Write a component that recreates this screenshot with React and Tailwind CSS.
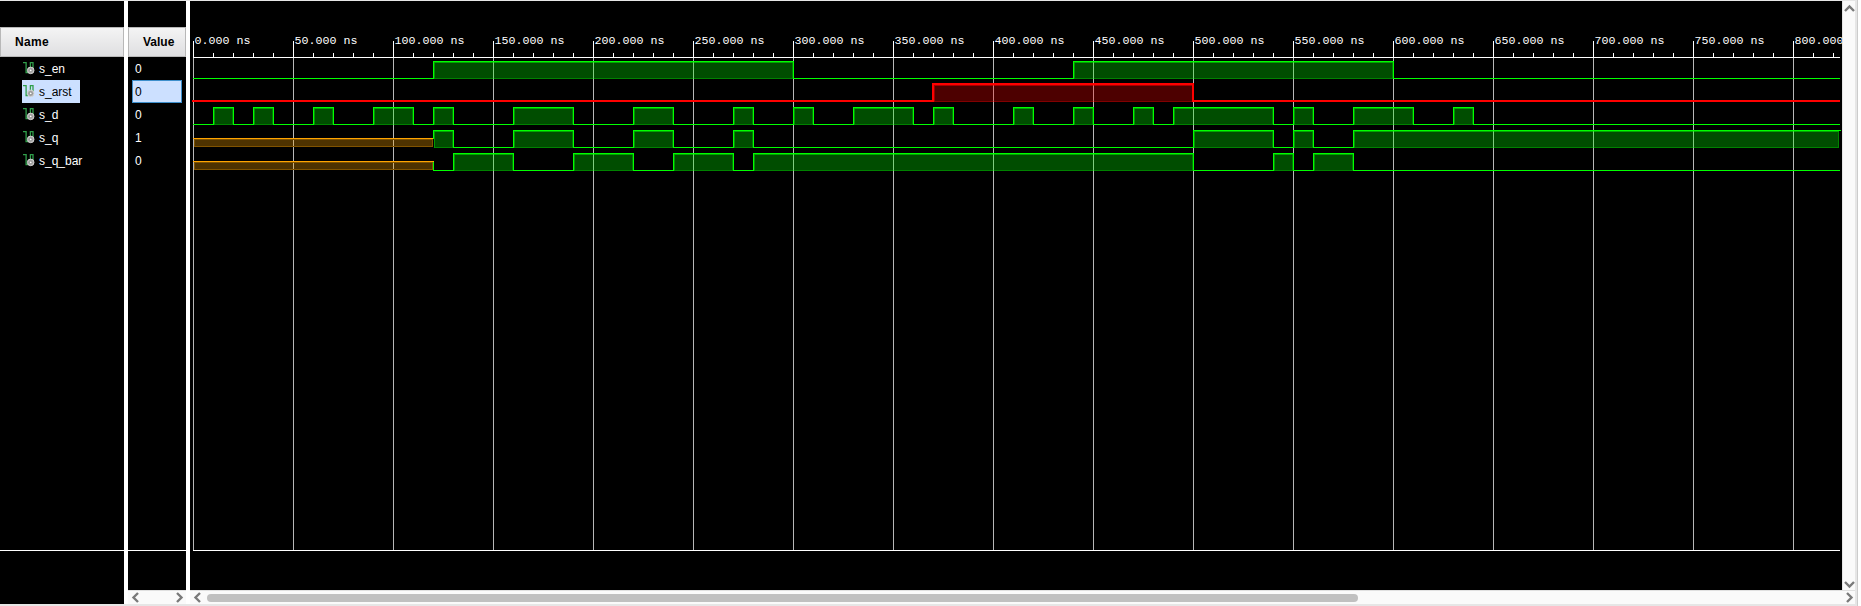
const X = (ns) => ns * 2 + 3;
const WIDTH = 1650;
const SIGNALS = [
  { name: "s_en", value: "0", top: 59, high: [[120, 300], [440, 600]] },
  { name: "s_arst", value: "0", top: 82, red: true, selected: true, high: [[370, 500]] },
  {
    name: "s_d", value: "0", top: 105,
    high: [[10, 20], [30, 40], [60, 70], [90, 110], [120, 130], [160, 190], [220, 240], [270, 280], [300, 310], [330, 360], [370, 380], [410, 420], [440, 450], [470, 480], [490, 540], [550, 560], [580, 610], [630, 640]],
  },
  { name: "s_q", value: "1", top: 128, unknown: 120, high: [[120, 130], [160, 190], [220, 240], [270, 280], [500, 540], [550, 560], [580, null]] },
  { name: "s_q_bar", value: "0", top: 151, unknown: 120, high: [[130, 160], [190, 220], [240, 270], [280, 500], [540, 550], [560, 580]] },
];

function SignalIcon() {
  return (
    <svg width="12" height="13" viewBox="0 0 12 13" className="shrink-0">
      <path d="M0 0.6H3.1V10.5H5M7.4 7V0.6H10V7" fill="none" stroke="#2f9e4a" strokeWidth="1.3" />
      <circle cx="7.7" cy="8.4" r="3.3" fill="#a8a8a8" stroke="#d8d8d8" strokeWidth="0.9" />
      <circle cx="7.7" cy="8.4" r="1.3" fill="#ffffff" stroke="#777777" strokeWidth="0.7" />
    </svg>
  );
}

function Arrow({ dir }) {
  const d = { left: "M8 1L3.5 5.5L8 10", right: "M3 1L7.5 5.5L3 10", up: "M1 8L5.5 3.5L10 8", down: "M1 3L5.5 7.5L10 3" }[dir];
  return (
    <svg width="11" height="11" viewBox="0 0 11 11" className="shrink-0">
      <path d={d} fill="none" stroke="#7a7a7a" strokeWidth="2.4" />
    </svg>
  );
}

function tracePath(s) {
  const hi = s.top + 1.5;
  const lo = s.top + 18.5;
  const start = s.unknown ? X(s.unknown) : 3;
  let d = "";
  let x = start;
  s.high.forEach(([a, b]) => {
    const xa = X(a);
    const xb = b === null ? WIDTH : X(b);
    if (s.unknown === a) {
      d += `M${xa + 0.5} ${s.top + 10}V${hi}H${xb + 0.5}`;
    } else {
      if (s.unknown && x === start) d += `M${x + 0.5} ${s.top + 10}V${lo}`;
      d += `M${x} ${lo}H${xa + 0.5}V${hi}H${xb + 0.5}`;
    }
    if (b !== null) d += `V${lo}`;
    x = xb;
  });
  if (x < WIDTH) d += `M${x} ${lo}H${WIDTH}`;
  return d;
}

function boldTracePath(s) {
  const hi = s.top + 1;
  const lo = s.top + 18;
  const body = s.high.map(([a, b]) => `H${X(a)}V${hi}H${X(b)}V${lo}`).join("");
  return `M2 ${lo}${body}H${WIDTH}`;
}

function Wave({ s }) {
  const hi = s.top + 1;
  const lo = s.top + 18;
  const color = s.red ? "#ff0000" : "#00ff00";
  return (
    <g>
      {s.unknown && (
        <g>
          <rect x="4" y={s.top + 10} width={X(s.unknown) - 4} height="8" fill="#ffa500" fillOpacity="0.3" />
          <rect x="4.5" y={s.top + 10.5} width={X(s.unknown) - 5} height="7" fill="none" stroke="#805300" />
          <rect x="3" y={s.top + 9} width={X(s.unknown) - 2} height="1" fill="#ffa500" />
        </g>
      )}
      {s.high.map(([a, b]) => {
        const xa = X(a);
        const xb = b === null ? WIDTH - 1 : X(b);
        return (
          <g key={a} fill={color}>
            <rect x={xa + 1} y={hi + 1} width={xb - xa - 1} height={lo - hi} fillOpacity="0.3" />
            <rect x={xa + 1} y={hi + 1} width={xb - xa - 1} height="1" fillOpacity="0.5" />
            <rect x={xa + 1} y={hi + 2} width="1" height={lo - hi - 1} fillOpacity="0.42" />
            <rect x={xb - 1} y={hi + 2} width="1" height={lo - hi - 1} fillOpacity="0.3" />
            <rect x={xa + 2} y={lo} width={xb - xa - 3} height="1" fillOpacity="0.3" />
          </g>
        );
      })}
      <path d={s.red ? boldTracePath(s) : tracePath(s)} fill="none" stroke={color} strokeWidth={s.red ? 2 : 1} />
    </g>
  );
}

function Chart() {
  const majors = Array.from({ length: 17 }, (_, i) => i * 50);
  const minors = Array.from({ length: 83 }, (_, i) => i * 10).filter((t) => t % 50);
  return (
    <svg width="1652" height="589" className="block" shapeRendering="crispEdges">
      {majors.map((t) => (
        <g key={t}>
          <rect x={X(t)} y="57" width="1" height="492" fill="#b8b8b8" />
          <rect x={X(t)} y="40" width="1" height="17" fill="#fff" />
          <text x={X(t) + 1.5} y="43" fill="#fff" fontFamily="'Liberation Mono', monospace" fontSize="11.67">{`${t}.000 ns`}</text>
        </g>
      ))}
      {minors.map((t) => <rect key={t} x={X(t)} y="52" width="1" height="5" fill="#fff" />)}
      <rect x="3" y="56" width="1647" height="1" fill="#fff" />
      <rect x="3" y="549" width="1647" height="1" fill="#fff" />
      {SIGNALS.map((s) => <Wave key={s.name} s={s} />)}
    </svg>
  );
}

export default function App() {
  return (
    <div className="flex h-[606px] w-[1861px] overflow-hidden bg-white font-['Liberation_Sans',sans-serif] text-[12px] text-white">
      <div className="flex h-full w-[1858px] flex-col border-r border-[#cccccc] bg-[#e6e6e6] pt-px">
        <div className="flex h-[603px] w-[1855px] bg-white">
          <div className="flex w-[124px] flex-col bg-black pt-[26px]">
            <div className="flex h-[30px] items-center border border-[#b8b8b8] bg-linear-to-b from-[#f4f4f4] to-[#dfdfe1] pl-[14px] font-bold tracking-[0.3px] text-black">Name</div>
            {SIGNALS.map((s) => (
              <div key={s.name} className="flex h-[23px] items-center pl-[22px]">
                <div className={s.selected ? "flex h-[23px] w-[58px] items-center gap-1 bg-[#cce0ff] pl-px text-black" : "flex h-[23px] items-center gap-1 pl-px"}>
                  <SignalIcon />
                  <span>{s.name}</span>
                </div>
              </div>
            ))}
            <div className="mt-[378px] h-px bg-white" />
          </div>
          <div className="ml-1 flex w-[58px] flex-col bg-black pt-[26px]">
            <div className="flex h-[30px] items-center border border-[#b8b8b8] bg-linear-to-b from-[#f4f4f4] to-[#dfdfe1] pl-[14px] font-bold text-black">Value</div>
            {SIGNALS.map((s) => (
              <div key={s.name} className="flex h-[23px] items-center pl-1">
                <div className={s.selected ? "flex h-[23px] w-[50px] items-center border border-[#3d8fcc] bg-[#cce0ff] pl-[2px] text-black" : "pl-[3px]"}>{s.value}</div>
              </div>
            ))}
            <div className="mt-[378px] h-px bg-white" />
            <div className="mt-[39px] flex grow items-center justify-between border-t border-[#e0e0e0] bg-[#fafafa] pr-px pl-[2px]">
              <Arrow dir="left" />
              <Arrow dir="right" />
            </div>
          </div>
          <div className="ml-1 flex w-[1665px] flex-col">
            <div className="flex h-[589px]">
              <div className="w-[1652px] overflow-hidden bg-black"><Chart /></div>
              <div className="flex w-[13px] flex-col items-end justify-between border-l border-[#e6e6e6] bg-[#fafafa] pt-[2px]">
                <Arrow dir="up" />
                <Arrow dir="down" />
              </div>
            </div>
            <div className="flex h-[14px] items-center border-t border-[#e0e0e0] bg-[#fafafa] pl-[2px]">
              <Arrow dir="left" />
              <div className="ml-[4px] h-2 w-[1151px] rounded-full bg-[#c0c0c0]" />
              <div className="ml-auto flex"><Arrow dir="right" /></div>
            </div>
          </div>
        </div>
      </div>
    </div>
  );
}
